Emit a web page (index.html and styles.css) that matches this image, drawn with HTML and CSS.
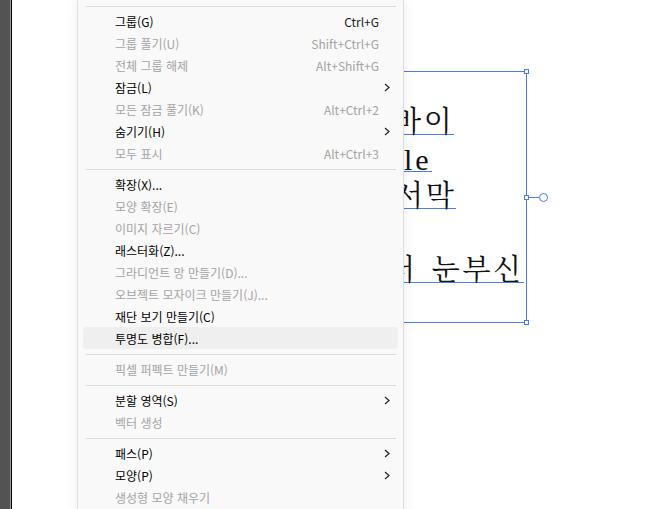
FILE: index.html
```html
<!DOCTYPE html>
<html lang="ko">
<head>
    <meta charset="UTF-8">
    <meta name="viewport" content="width=device-width, initial-scale=1.0">
    <title>개체 메뉴</title>
    <link rel="stylesheet" href="styles.css">
</head>
<body>
    <div class="workspace">
        <div class="tool-edge"></div>

        <div class="canvas">
            <!-- selected text frame behind the menu -->
            <div class="text-frame">
                <p class="frame-line line-1">바이</p>
                <p class="frame-line line-2">le</p>
                <p class="frame-line line-3">서막</p>
                <p class="frame-line is-empty"></p>
                <p class="frame-line line-5">터 눈부신</p>

                <span class="handle handle-top"></span>
                <span class="handle handle-mid"></span>
                <span class="handle handle-bottom"></span>
                <div class="rotate-handle">
                    <span class="rotate-stem"></span>
                    <span class="rotate-knob"></span>
                </div>
            </div>

            <ul class="context-menu">
                <li class="menu-sep"></li>
                <li class="menu-item"><span class="label">그룹(G)</span><span class="shortcut">Ctrl+G</span></li>
                <li class="menu-item is-disabled"><span class="label">그룹 풀기(U)</span><span class="shortcut">Shift+Ctrl+G</span></li>
                <li class="menu-item is-disabled"><span class="label">전체 그룹 해제</span><span class="shortcut">Alt+Shift+G</span></li>
                <li class="menu-item"><span class="label">잠금(L)</span>
                    <svg class="arrow" viewBox="0 0 6 9"><path d="M1 1l4 3.5L1 8"/></svg></li>
                <li class="menu-item is-disabled"><span class="label">모든 잠금 풀기(K)</span><span class="shortcut">Alt+Ctrl+2</span></li>
                <li class="menu-item"><span class="label">숨기기(H)</span>
                    <svg class="arrow" viewBox="0 0 6 9"><path d="M1 1l4 3.5L1 8"/></svg></li>
                <li class="menu-item is-disabled"><span class="label">모두 표시</span><span class="shortcut">Alt+Ctrl+3</span></li>

                <li class="menu-sep"></li>
                <li class="menu-item"><span class="label">확장(X)...</span></li>
                <li class="menu-item is-disabled"><span class="label">모양 확장(E)</span></li>
                <li class="menu-item is-disabled"><span class="label">이미지 자르기(C)</span></li>
                <li class="menu-item"><span class="label">래스터화(Z)...</span></li>
                <li class="menu-item is-disabled"><span class="label">그라디언트 망 만들기(D)...</span></li>
                <li class="menu-item is-disabled"><span class="label">오브젝트 모자이크 만들기(J)...</span></li>
                <li class="menu-item"><span class="label">재단 보기 만들기(C)</span></li>
                <li class="menu-item is-hover"><span class="label">투명도 병합(F)...</span></li>

                <li class="menu-sep"></li>
                <li class="menu-item is-disabled"><span class="label">픽셀 퍼펙트 만들기(M)</span></li>

                <li class="menu-sep"></li>
                <li class="menu-item"><span class="label">분할 영역(S)</span>
                    <svg class="arrow" viewBox="0 0 6 9"><path d="M1 1l4 3.5L1 8"/></svg></li>
                <li class="menu-item is-disabled"><span class="label">벡터 생성</span></li>

                <li class="menu-sep"></li>
                <li class="menu-item"><span class="label">패스(P)</span>
                    <svg class="arrow" viewBox="0 0 6 9"><path d="M1 1l4 3.5L1 8"/></svg></li>
                <li class="menu-item"><span class="label">모양(P)</span>
                    <svg class="arrow" viewBox="0 0 6 9"><path d="M1 1l4 3.5L1 8"/></svg></li>
                <li class="menu-item is-disabled"><span class="label">생성형 모양 채우기</span></li>
            </ul>
        </div>
    </div>
</body>
</html>
```

FILE: styles.css
```css
* {
    margin: 0;
    padding: 0;
    box-sizing: border-box;
}

body {
    width: 663px;
    height: 509px;
    overflow: hidden;
    background: #fff;
    font-family: 'Noto Sans CJK KR', 'Noto Sans', sans-serif;
}

.workspace {
    display: flex;
    height: 100%;
}

.tool-edge {
    width: 12px;
    flex-shrink: 0;
    background: linear-gradient(to right, #535353 10px, #9a9a9a 10px 11px, #000 11px);
}

.canvas {
    position: relative;
    flex: 1;
    overflow: hidden;
    background: #fff;
}

/* text frame */
.text-frame {
    position: absolute;
    left: 238px;
    top: 71px;
    width: 277px;
    height: 252px;
    border: 1px solid #4a7bf0;
    padding-top: 26px;
    font-family: 'Liberation Serif', 'Noto Serif CJK KR', 'Noto Sans CJK KR', serif;
    font-size: 29px;
    letter-spacing: 2.7px;
    word-spacing: 4px;
    color: #111;
    white-space: nowrap;
}

.frame-line {
    width: fit-content;
    padding-top: 13px;
    line-height: 23px;
    border-bottom: 1px solid #4a7bf0;
}

.frame-line.is-empty {
    height: 37px;
    border-bottom: none;
}

.line-1 { padding-left: 142px; }
.line-2 { padding-left: 153px; font-size: 30px; letter-spacing: 3px; }
.line-3 { padding-left: 144px; }
.line-5 { padding-left: 136px; }

.handle {
    position: absolute;
    right: -3px;
    width: 5px;
    height: 5px;
    background: #fff;
    border: 1px solid #4a7bf0;
}

.handle-top { top: -3px; }
.handle-mid { top: calc(50% - 2px); }
.handle-bottom { bottom: -3px; }

.rotate-handle {
    position: absolute;
    left: calc(100% + 2px);
    top: calc(50% - 4px);
    display: flex;
    align-items: center;
    height: 8px;
}

.rotate-stem {
    width: 11px;
    height: 1px;
    background: #4a7bf0;
}

.rotate-knob {
    width: 9px;
    height: 9px;
    border: 1px solid #4a7bf0;
    border-radius: 50%;
    background: #fff;
}

/* context menu */
.context-menu {
    position: absolute;
    left: 65px;
    top: 0;
    bottom: -30px;
    width: 327px;
    padding-top: 1px;
    list-style: none;
    background: #f9f9f9;
    border-left: 1px solid #e2e2e2;
    border-right: 1px solid #dcdcdc;
    box-shadow: 0 0 12px rgba(0,0,0,0.08);
    font-size: 12px;
    color: #000;
}

.menu-sep {
    height: 1px;
    margin: 5px 7px 3px 8px;
    background: #dadada;
}

.menu-item {
    display: flex;
    align-items: center;
    height: 22px;
    margin: 0 5px;
    padding: 0 8px 0 32px;
    border-radius: 4px;
    white-space: nowrap;
}

.menu-item .label {
    flex: 1;
}

.menu-item .shortcut {
    margin-right: 11px;
    color: #1a1a1a;
}

.menu-item.is-disabled,
.menu-item.is-disabled .shortcut {
    color: #a3a3a3;
}

.menu-item.is-hover {
    background: #efefef;
}

.arrow {
    width: 6px;
    height: 9px;
    fill: none;
    stroke: #222;
    stroke-width: 1.2;
}
```
